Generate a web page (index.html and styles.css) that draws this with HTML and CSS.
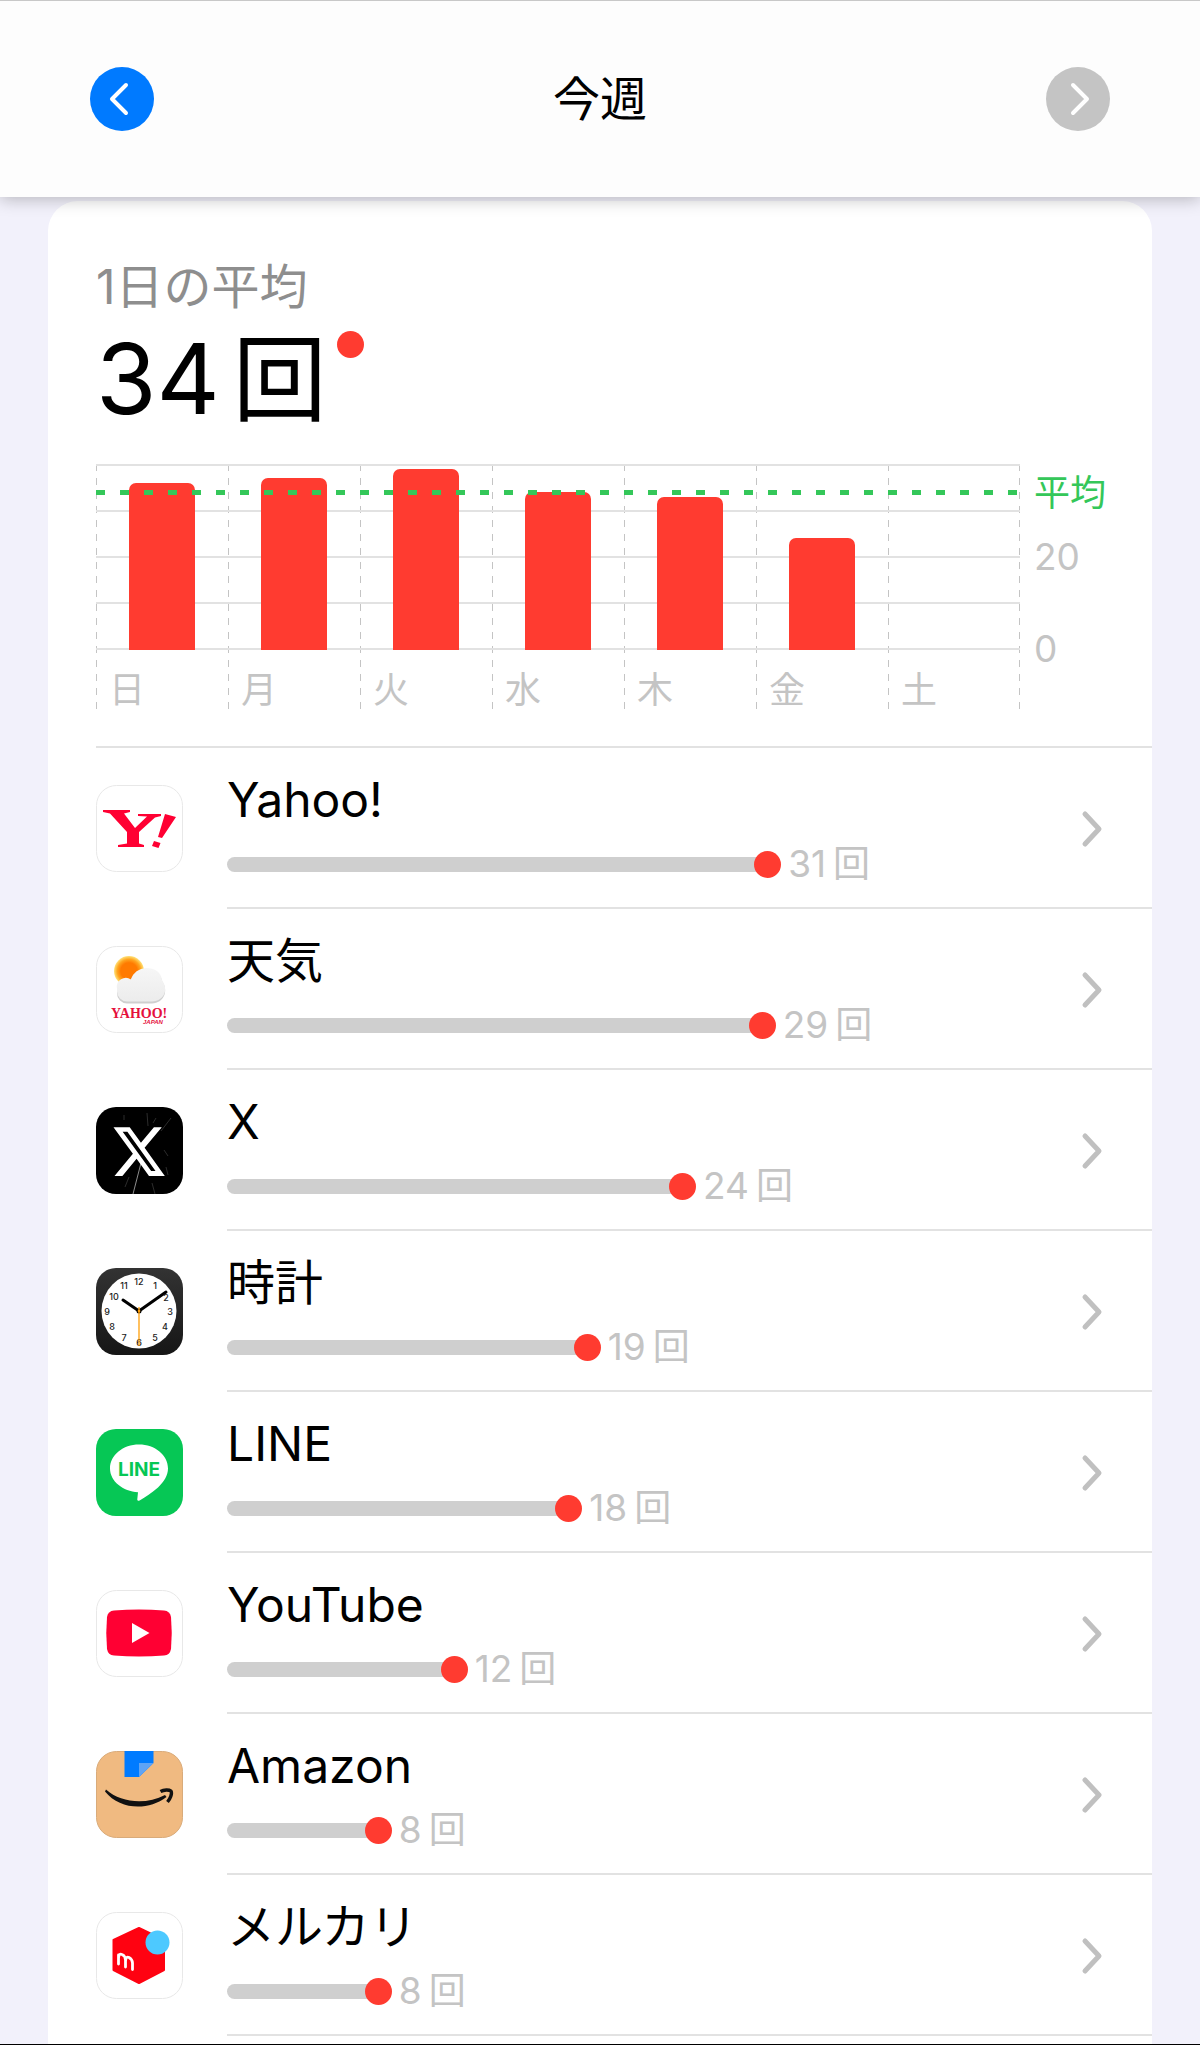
FILE: index.html
```html
<!DOCTYPE html>
<html lang="ja">
<head>
<meta charset="utf-8">
<meta name="viewport" content="width=device-width, initial-scale=1">
<title>今週</title>
<link rel="stylesheet" href="styles.css">
</head>
<body>
<header class="topbar">
  <button class="nav-btn" type="button" aria-label="前の週"><svg viewBox="0 0 64 64" aria-hidden="true"><path d="M36 18 22 32 36 46"/></svg></button>
  <h1 class="title">今週</h1>
  <button class="nav-btn" type="button" aria-label="次の週" disabled><svg viewBox="0 0 64 64" aria-hidden="true"><path d="M27 18 41 32 27 46"/></svg></button>
</header>
<main class="card">
  <section class="summary">
    <p class="caption">1日の平均</p>
    <p class="total"><span>34</span><span class="total-unit">回</span><i class="total-dot"></i></p>
    <div class="chart">
      <div class="plot">
        <div class="day"><div class="slot"><i class="bar" style="height:90%"></i></div><span>日</span></div>
        <div class="day"><div class="slot"><i class="bar" style="height:92.5%"></i></div><span>月</span></div>
        <div class="day"><div class="slot"><i class="bar" style="height:97.5%"></i></div><span>火</span></div>
        <div class="day"><div class="slot"><i class="bar" style="height:85%"></i></div><span>水</span></div>
        <div class="day"><div class="slot"><i class="bar" style="height:82.5%"></i></div><span>木</span></div>
        <div class="day"><div class="slot"><i class="bar" style="height:60%"></i></div><span>金</span></div>
        <div class="day"><div class="slot"></div><span>土</span></div>
        <i class="average-line"></i>
      </div>
      <div class="axis"><span class="avg">平均</span><span>20</span><span>0</span></div>
    </div>
  </section>
  <ul class="apps">
    <li><a class="app" href="#yahoo">
      <svg class="icon" viewBox="0 0 87 87" aria-hidden="true"><rect class="tile" x=".5" y=".5" width="86" height="86" rx="20"/>
        <path fill="#ff0033" d="M7 25H34V27L28 28.500 39 43 51 31.500 42 31V29H65V31L59 32.500 43 47V58.500L48 60V62H22V60L31 58.500V47L14 28.500 7 27ZM69 29 80 32 66 53 62 52ZM58 56 64.500 58 62.500 63 56 61Z"/></svg>
      <div class="info"><span class="name">Yahoo!</span><span class="usage"><i class="track" style="width:58.4%"></i><i class="dot"></i><span>31</span><span>回</span></span></div>
      <svg class="chevron" viewBox="0 0 24 40" aria-hidden="true"><path d="M5 5 19 20 5 35"/></svg></a></li>
    <li><a class="app" href="#weather">
      <svg class="icon" viewBox="0 0 87 87" aria-hidden="true">
        <defs><radialGradient id="sun"><stop offset=".55" stop-color="#ff7a00"/><stop offset=".78" stop-color="#ffa51f"/><stop offset="1" stop-color="#ffe27a"/></radialGradient><linearGradient id="cloud" x1="0" y1="0" x2="0" y2="1"><stop offset="0" stop-color="#f6f6f6"/><stop offset="1" stop-color="#ececec"/></linearGradient></defs>
        <rect class="tile" x=".5" y=".5" width="86" height="86" rx="20"/>
        <circle cx="33" cy="25" r="15" fill="url(#sun)"/>
        <path fill="#cfcfcf" d="M31 57.500a10 10 0 0 1-10-10v-3a9.500 9.500 0 0 1 13-9A17 17 0 0 1 50 23c9 0 15 5 16 12 7 10 2 22-10 22.500Z"/>
        <path fill="url(#cloud)" d="M31 55.500a10 10 0 0 1-10-10v-3a9 9 0 0 1 14-9A16 16 0 0 1 50 22c9 0 15 4 16 12 7 10 2 21-10 21.500Z"/>
        <text class="yahoo-word" x="15" y="72">YAHOO!</text><text class="yahoo-word small" x="47" y="78">JAPAN</text></svg>
      <div class="info"><span class="name">天気</span><span class="usage"><i class="track" style="width:57.8%"></i><i class="dot"></i><span>29</span><span>回</span></span></div>
      <svg class="chevron" viewBox="0 0 24 40" aria-hidden="true"><path d="M5 5 19 20 5 35"/></svg></a></li>
    <li><a class="app" href="#x">
      <svg class="icon" viewBox="0 0 87 87" aria-hidden="true"><rect width="87" height="87" rx="20"/>
        <g fill="none" stroke="#4a4a4a"><path d="M51 6l1 13M57 16l3-5M75 11l-10 13M28 8v5M68 43l4 6M56 76l3 11M33 70l-4 10M70 60l2 8" opacity=".6"/><path d="M45 56 37 87" stroke="#8d8d8d"/></g>
        <path fill="#fff" transform="translate(14.500 14.500) scale(2.380 2.500)" d="M18.244 2.250h3.308l-7.227 8.260 8.502 11.240H16.170l-5.214-6.817L4.990 21.750H1.680l7.730-8.835L1.254 2.250H8.080l4.713 6.231zm-1.161 17.520h1.833L7.084 4.126H5.117z"/></svg>
      <div class="info"><span class="name">X</span><span class="usage"><i class="track" style="width:49.2%"></i><i class="dot"></i><span>24</span><span>回</span></span></div>
      <svg class="chevron" viewBox="0 0 24 40" aria-hidden="true"><path d="M5 5 19 20 5 35"/></svg></a></li>
    <li><a class="app" href="#clock">
      <svg class="icon" viewBox="0 0 87 87" aria-hidden="true">
        <defs><linearGradient id="case" x1="0" y1="0" x2="0" y2="1"><stop offset="0" stop-color="#333"/><stop offset="1" stop-color="#161616"/></linearGradient></defs>
        <rect width="87" height="87" rx="20" fill="url(#case)"/><circle cx="43" cy="43" r="37.500" fill="#fff"/>
        <g class="numerals"><text x="43" y="17">12</text><text x="59" y="21">1</text><text x="70" y="33">2</text><text x="74" y="47">3</text><text x="69" y="62">4</text><text x="59" y="73">5</text><text x="43" y="78">6</text><text x="28" y="73">7</text><text x="16" y="62">8</text><text x="11" y="47">9</text><text x="18" y="32">10</text><text x="28" y="21">11</text></g>
        <path d="M43 43 27 32M43 43 70 24" stroke="#000" stroke-width="3" stroke-linecap="round"/>
        <circle cx="43" cy="43" r="2.500"/><path d="M43 39V78" stroke="#ff9f0a" stroke-width="1.300"/><circle cx="43" cy="43" r="1.300" fill="#ff9f0a"/></svg>
      <div class="info"><span class="name">時計</span><span class="usage"><i class="track" style="width:38.9%"></i><i class="dot"></i><span>19</span><span>回</span></span></div>
      <svg class="chevron" viewBox="0 0 24 40" aria-hidden="true"><path d="M5 5 19 20 5 35"/></svg></a></li>
    <li><a class="app" href="#line">
      <svg class="icon" viewBox="0 0 87 87" aria-hidden="true"><rect width="87" height="87" rx="20" fill="#06c755"/>
        <path fill="#fff" d="M43 15.500c16 0 29 10.500 29 24 0 7-4 13-10 19-6 5-13 10-18 12.800-2.500 1.200-3 .2-2.600-2l.6-6c-15-1-28-11-28-23.800 0-13.500 13-24 29-24Z"/>
        <text class="line-word" x="43" y="47">LINE</text></svg>
      <div class="info"><span class="name">LINE</span><span class="usage"><i class="track" style="width:36.9%"></i><i class="dot"></i><span>18</span><span>回</span></span></div>
      <svg class="chevron" viewBox="0 0 24 40" aria-hidden="true"><path d="M5 5 19 20 5 35"/></svg></a></li>
    <li><a class="app" href="#youtube">
      <svg class="icon" viewBox="0 0 87 87" aria-hidden="true"><rect class="tile" x=".5" y=".5" width="86" height="86" rx="20"/>
        <path fill="#ff0033" d="M18 20.500Q43 18.500 68 20.500 74 21 75 27 76.500 43 75 59 74 65 68 65.500 43 67.500 18 65.500 12 65 11 59 9.500 43 11 27 12 21 18 20.500Z"/><path fill="#fff" d="M36 33 53.500 43 36 53Z"/></svg>
      <div class="info"><span class="name">YouTube</span><span class="usage"><i class="track" style="width:24.5%"></i><i class="dot"></i><span>12</span><span>回</span></span></div>
      <svg class="chevron" viewBox="0 0 24 40" aria-hidden="true"><path d="M5 5 19 20 5 35"/></svg></a></li>
    <li><a class="app" href="#amazon">
      <svg class="icon" viewBox="0 0 87 87" aria-hidden="true"><rect x=".5" y=".5" width="86" height="86" rx="20" fill="#f0ba81" stroke="#d9ab7a"/>
        <path fill="#007bff" d="M28.500 0H57.500V12L43 26H28.500Z"/><path fill="#5fa4f5" d="M43 12H57.500L43 26Z"/>
        <path fill="#111" d="M10 38.500C25 52 50 54 69 44L70.500 46C52 60 24 59 9 40.500Z"/>
        <path fill="none" stroke="#111" stroke-width="3.400" stroke-linejoin="round" d="M64.500 40.500C68 38.500 73 38.500 75 40 76.500 42.500 74 48 71.500 51"/></svg>
      <div class="info"><span class="name">Amazon</span><span class="usage"><i class="track" style="width:16.3%"></i><i class="dot"></i><span>8</span><span>回</span></span></div>
      <svg class="chevron" viewBox="0 0 24 40" aria-hidden="true"><path d="M5 5 19 20 5 35"/></svg></a></li>
    <li><a class="app" href="#mercari">
      <svg class="icon" viewBox="0 0 87 87" aria-hidden="true"><rect class="tile" x=".5" y=".5" width="86" height="86" rx="20"/>
        <path fill="#ff0211" stroke="#ff0211" stroke-width="2" stroke-linejoin="round" d="M43 16 68 28V58L43 71 17.500 58V28Z"/><circle cx="61.500" cy="30.500" r="12" fill="#4dc9ff"/>
        <path fill="none" stroke="#fff" stroke-width="2.800" stroke-linecap="round" stroke-linejoin="round" d="M22.500 52V43M22.500 46Q23 41 26 42.500 29.500 44 29.500 48V55M29.500 49Q30 44 33 45.500 36.500 47.500 36.500 51V57.500"/></svg>
      <div class="info"><span class="name">メルカリ</span><span class="usage"><i class="track" style="width:16.3%"></i><i class="dot"></i><span>8</span><span>回</span></span></div>
      <svg class="chevron" viewBox="0 0 24 40" aria-hidden="true"><path d="M5 5 19 20 5 35"/></svg></a></li>
  </ul>
</main>
</body>
</html>
```
FILE: styles.css
```css
:root {
  --red: #ff3b30;
  --green: #34c759;
  --rule: #e2e2e2;
  --dash: #c4c4c4;
  --muted: #c4c4c4;
}

* { box-sizing: border-box; }

body {
  margin: 0;
  background: #f2f1fb;
  border-bottom: 1px solid #000;
  color: #000;
  font-family: Inter, "Noto Sans CJK JP", sans-serif;
}

p, h1, ul { margin: 0; padding: 0; }
i { display: block; }

.topbar {
  position: relative;
  display: flex;
  align-items: center;
  justify-content: space-between;
  height: 197px;
  padding: 0 90px;
  background: #fdfdfd;
  border-top: 1px solid #c8c8c8;
  box-shadow: 0 2px 16px rgba(0, 0, 0, .26);
}

.title { font-size: 47px; line-height: 64px; font-weight: 400; }

.nav-btn {
  width: 64px;
  height: 64px;
  padding: 0;
  border: 0;
  border-radius: 50%;
  background: #007aff;
}
.nav-btn:disabled { background: #c4c4c4; }
.nav-btn svg {
  display: block;
  fill: none;
  stroke: #fff;
  stroke-width: 4;
  stroke-linecap: round;
  stroke-linejoin: round;
}

.card {
  margin: 4px 48px 0;
  padding-bottom: 8px;
  background: #fff;
  border-radius: 30px 30px 0 0;
}

.summary {
  margin-left: 48px;
  padding-top: 56px;
  border-bottom: 2px solid var(--rule);
}

.caption { font-size: 48px; line-height: 60px; color: #8e8e8e; }

.total {
  display: flex;
  align-items: baseline;
  gap: 13px;
  padding-top: 2px;
  font-size: 98px;
  line-height: 120px;
}
.total-unit { font-size: 94px; }
.total-dot {
  align-self: flex-start;
  width: 27px;
  height: 27px;
  margin: 12px 0 0 -3px;
  border-radius: 50%;
  background: var(--red);
}

.chart { display: flex; gap: 14px; margin: 24px 40px 0 0; padding-bottom: 36px; }

.plot {
  position: relative;
  display: grid;
  grid-template-columns: repeat(7, 1fr);
  flex: 1;
  background: repeating-linear-gradient(to bottom, var(--dash) 0 7px, transparent 7px 14px) right / 1px 100% no-repeat;
}

.day {
  background: repeating-linear-gradient(to bottom, var(--dash) 0 7px, transparent 7px 14px) left / 1px 100% no-repeat;
  color: var(--muted);
  font-size: 36px;
  line-height: 40px;
}
.day span { display: block; padding: 20px 0 0 13px; }

.slot {
  display: flex;
  align-items: flex-end;
  justify-content: center;
  height: 186px;
  background: repeating-linear-gradient(to bottom, var(--rule) 0 2px, transparent 2px 46px);
}

.bar { width: 50%; border-radius: 7px 7px 0 0; background: var(--red); }

.average-line {
  position: absolute;
  top: 26px;
  left: 0;
  right: 0;
  height: 5px;
  background: repeating-linear-gradient(to right, var(--green) 0 9px, transparent 9px 24px);
}

.axis {
  display: flex;
  flex-direction: column;
  width: 78px;
  color: var(--muted);
  font-size: 37px;
  line-height: 46px;
}
.axis span { margin-bottom: 46px; }
.axis .avg { margin: 6px 0 18px; color: var(--green); font-size: 36px; }
.axis span:last-child { margin-bottom: 0; }

.apps { list-style: none; }

.app {
  display: flex;
  align-items: center;
  height: 161px;
  padding-left: 48px;
  color: inherit;
  text-decoration: none;
  position: relative;
}

.icon { flex: none; width: 87px; height: 87px; margin-right: 44px; }
.tile { fill: #fff; stroke: #e8e8e8; }

.info {
  flex: 1;
  align-self: stretch;
  padding-top: 21px;
  border-bottom: 2px solid var(--rule);
}

.name { display: block; font-size: 48px; line-height: 62px; }

.usage {
  display: flex;
  align-items: center;
  height: 66px;
  color: var(--muted);
  font-size: 37px;
  line-height: 48px;
  gap: 7px;
}
.track { flex: none; height: 15px; border-radius: 8px 0 0 8px; background: #cfcfcf; }
.dot { flex: none; width: 27px; height: 27px; margin-left: -20px; border-radius: 50%; background: var(--red); }

.chevron {
  position: absolute;
  right: 48px;
  width: 24px;
  height: 40px;
  fill: none;
  stroke: #c0c0c0;
  stroke-width: 5;
  stroke-linecap: round;
  stroke-linejoin: round;
}

.yahoo-word { fill: #e5103c; font: 700 14px "Liberation Serif", serif; }
.yahoo-word.small { font: italic 700 6px "Liberation Sans", sans-serif; }
.numerals { fill: #222; font: 500 9px Inter, sans-serif; text-anchor: middle; }
.line-word { fill: #06c755; font: 700 19px Inter, sans-serif; text-anchor: middle; }
```
